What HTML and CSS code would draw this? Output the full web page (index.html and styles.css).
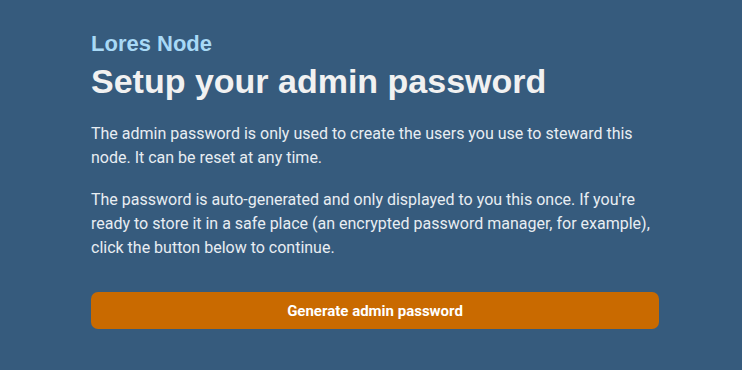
FILE: index.html
```html
<!DOCTYPE html>
<html lang="en">
<head>
<meta charset="utf-8">
<title>Lores Node</title>
<link rel="stylesheet" href="styles.css">
</head>
<body>
<main class="page">
  <p class="brand">Lores Node</p>
  <h1 class="title">Setup your admin password</h1>
  <p class="text">The admin password is only used to create the users you use to steward this node. It can be reset at any time.</p>
  <p class="text">The password is auto-generated and only displayed to you this once. If you're ready to store it in a safe place (an encrypted password manager, for example), click the button below to continue.</p>
  <button class="btn" type="button">Generate admin password</button>
</main>
</body>
</html>
```
FILE: styles.css
```css
html, body {
  margin: 0;
  padding: 0;
}
body {
  background: #365b7d;
  min-height: 370px;
}
.page {
  width: 568px;
  margin: 0 auto;
  padding: 31px 0 0 8px;
  box-sizing: content-box;
}
.brand {
  margin: 0;
  font-family: "Liberation Sans", Arial, sans-serif;
  font-weight: bold;
  font-size: 22px;
  line-height: 26px;
  color: #a8d9f6;
}
.title {
  margin: 0 0 17px;
  font-family: "Liberation Sans", Arial, sans-serif;
  font-weight: bold;
  font-size: 34px;
  line-height: 48px;
  color: #f1f1f1;
}
.text {
  margin: 0 0 18px;
  font-family: Roboto, sans-serif;
  font-size: 16px;
  line-height: 24px;
  color: #e8edf2;
}
.btn {
  display: block;
  width: 100%;
  height: 37px;
  margin-top: 32px;
  border: 0;
  border-radius: 7px;
  background: #c96a00;
  color: #ffffff;
  font-family: Roboto, sans-serif;
  font-weight: bold;
  font-size: 15px;
}
```
